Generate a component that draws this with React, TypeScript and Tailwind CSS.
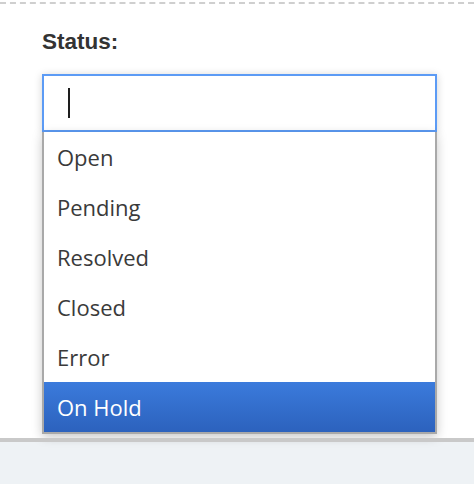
import React from "react";

const options = ["Open", "Pending", "Resolved", "Closed", "Error", "On Hold"];

export default function App() {
  const selected = "On Hold";
  return (
    <div className="w-[474px] h-[484px] bg-[#eef2f5] flex flex-col overflow-hidden">
      <div className="bg-white h-[438px] flex flex-col">
        <div className="mt-[2px] border-t-2 border-dashed border-[#cfcfcf]" />
        <div className="pl-[42px] pr-[37px] flex flex-col">
          <label className="mt-[27px] h-[22px] leading-[22px] text-[22.5px] font-semibold text-[#333] font-['Liberation_Sans',Arial,sans-serif]">
            Status:
          </label>
          <div className="mt-[21px] h-[58px] border-2 border-[#5c9bf5] bg-white shadow-[0_1px_8px_rgba(0,0,0,0.18)] flex items-center pl-[24px]">
            <span className="block w-[2px] h-[30px] bg-[#1e1e1e]" />
          </div>
          <ul className="border-x-2 border-b-2 border-[#a9a9a9] bg-white shadow-[0_3px_10px_rgba(0,0,0,0.22)] font-['Open_Sans',sans-serif]">
            {options.map((o) => (
              <li
                key={o}
                className={
                  o === selected
                    ? "h-[50px] flex items-center pl-[13px] text-[22px] text-white bg-gradient-to-b from-[#3b7bdc] to-[#2c62bd]"
                    : "h-[50px] flex items-center pl-[13px] text-[22px] text-[#3a3a3a]"
                }
              >
                {o}
              </li>
            ))}
          </ul>
        </div>
      </div>
      <div className="h-[4px] bg-[#c9c9c9]" />
    </div>
  );
}
